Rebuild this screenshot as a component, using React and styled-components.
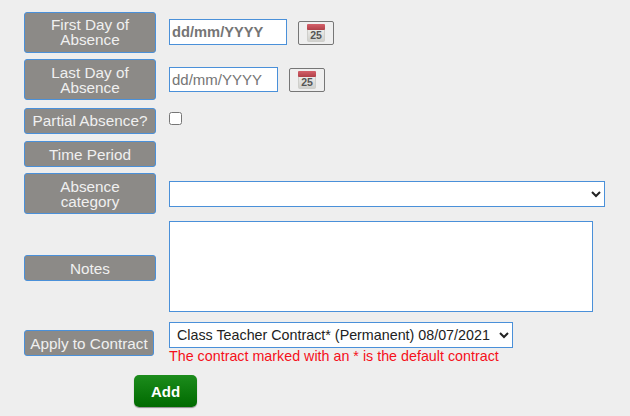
import React from 'react';
import styled, { createGlobalStyle } from 'styled-components';

const GlobalStyle = createGlobalStyle`
  html, body {
    margin: 0;
    padding: 0;
    background: #eeeeee;
    font-family: "Liberation Sans", Arial, sans-serif;
  }
`;

const Form = styled.form`
  width: 630px;
  height: 416px;
  box-sizing: border-box;
  padding: 12px 0 0 24px;
  overflow: hidden;
`;

const Row = styled.div`
  display: flex;
  align-items: ${props => props.$align || 'center'};
  margin-top: ${props => props.$top || 0}px;
`;

const Label = styled.label`
  flex: none;
  width: ${props => props.$width || 132}px;
  margin-right: 13px;
  margin-bottom: ${props => props.$bottom || 0}px;
  box-sizing: border-box;
  padding: ${props => (props.$raised ? '4px 5px 5px' : '5px 5px 4px')};
  background: #8c8a87;
  border: 1px solid #4a90d9;
  border-radius: 3px;
  color: #f0f0f0;
  font-size: 15.3px;
  line-height: 15px;
  text-align: center;
  white-space: ${props => (props.$nowrap ? 'nowrap' : 'normal')};
`;

const DateGroup = styled.div`
  display: flex;
  align-items: flex-end;
  align-self: flex-start;
  margin-top: ${props => props.$top}px;
`;

const DateInput = styled.input`
  width: ${props => props.$width}px;
  height: ${props => props.$height}px;
  box-sizing: border-box;
  padding: 1px 2px;
  background: #fff;
  border: 1px solid #4a90d9;
  border-radius: 0;
  outline: none;
  font-family: "Liberation Sans", Arial, sans-serif;
  font-size: ${props => (props.$bold ? 14.7 : 15)}px;
  font-weight: ${props => (props.$bold ? 700 : 400)};
  &::placeholder {
    color: #757575;
    opacity: 1;
  }
`;

const CalendarButton = styled.button`
  flex: none;
  width: 36px;
  height: 24px;
  margin-left: 11px;
  padding: 0;
  display: flex;
  align-items: center;
  justify-content: center;
  background: #efefef;
  border: 1px solid #767676;
  border-radius: 2px;
`;

const Checkbox = styled.input`
  width: 13px;
  height: 13px;
  margin: 4px 0 0;
`;

const Select = styled.select`
  display: block;
  width: ${props => props.$width}px;
  height: 26px;
  box-sizing: border-box;
  padding-left: 3px;
  background: #fff;
  border: 1px solid #4a90d9;
  border-radius: 0;
  outline: none;
  color: #222;
  font-family: "Liberation Sans", Arial, sans-serif;
  font-size: 14.3px;
`;

const Notes = styled.textarea`
  display: block;
  width: 424px;
  height: 91px;
  box-sizing: border-box;
  margin: 0;
  background: #fff;
  border: 1px solid #4a90d9;
  border-radius: 0;
  outline: none;
  resize: none;
`;

const ContractColumn = styled.div`
  display: flex;
  flex-direction: column;
  margin-left: 2px;
`;

const Hint = styled.div`
  color: #f5101a;
  font-size: 14.3px;
  line-height: 15px;
  margin-top: 1px;
`;

const AddButton = styled.button`
  display: block;
  width: 63px;
  height: 32px;
  margin: 11px 0 0 110px;
  padding: 0;
  background: linear-gradient(#1c8c1c, #006a00);
  border: none;
  border-radius: 5px;
  box-shadow: 0 1px 1px rgba(0, 0, 0, 0.4);
  color: #fff;
  font-family: "Liberation Sans", Arial, sans-serif;
  font-size: 15px;
  font-weight: 700;
`;

const CalendarIcon = () => (
  <svg width="18" height="18" viewBox="0 0 18 18">
    <defs>
      <linearGradient id="calPage" x1="0" y1="0" x2="0" y2="1">
        <stop offset="0" stopColor="#f4f4f2" />
        <stop offset="1" stopColor="#cfcfcc" />
      </linearGradient>
      <linearGradient id="calTop" x1="0" y1="0" x2="0" y2="1">
        <stop offset="0" stopColor="#d4606a" />
        <stop offset="1" stopColor="#b04048" />
      </linearGradient>
    </defs>
    <rect x="0.5" y="2.5" width="17" height="15" rx="1" fill="url(#calPage)" stroke="#cfcfcb" />
    <rect x="0" y="0" width="18" height="6" rx="1" fill="url(#calTop)" />
    <text x="9" y="15" textAnchor="middle" fontFamily="Liberation Sans" fontSize="10.5" fontWeight="700" fill="#555">25</text>
  </svg>
);

const App = () => (
  <>
    <GlobalStyle />
    <Form onSubmit={e => e.preventDefault()}>
      <Row>
        <Label $raised>First Day of Absence</Label>
        <DateGroup $top={7}>
          <DateInput $width={118} $height={26} $bold placeholder="dd/mm/YYYY" />
          <CalendarButton type="button"><CalendarIcon /></CalendarButton>
        </DateGroup>
      </Row>
      <Row $top={6}>
        <Label>Last Day of Absence</Label>
        <DateGroup $top={8}>
          <DateInput $width={109} $height={25} placeholder="dd/mm/YYYY" />
          <CalendarButton type="button"><CalendarIcon /></CalendarButton>
        </DateGroup>
      </Row>
      <Row $top={8} $align="flex-start">
        <Label $nowrap $raised>Partial Absence?</Label>
        <Checkbox type="checkbox" />
      </Row>
      <Row $top={7}>
        <Label>Time Period</Label>
      </Row>
      <Row $top={6}>
        <Label>Absence category</Label>
        <Select $width={436}><option></option></Select>
      </Row>
      <Row $top={7} $align="flex-end">
        <Label $bottom={31}>Notes</Label>
        <Notes />
      </Row>
      <Row $top={10}>
        <Label $width={130} $nowrap>Apply to Contract</Label>
        <ContractColumn>
          <Select $width={344}>
            <option>Class Teacher Contract* (Permanent) 08/07/2021</option>
          </Select>
          <Hint>The contract marked with an * is the default contract</Hint>
        </ContractColumn>
      </Row>
      <AddButton type="submit">Add</AddButton>
    </Form>
  </>
);

export default App;
